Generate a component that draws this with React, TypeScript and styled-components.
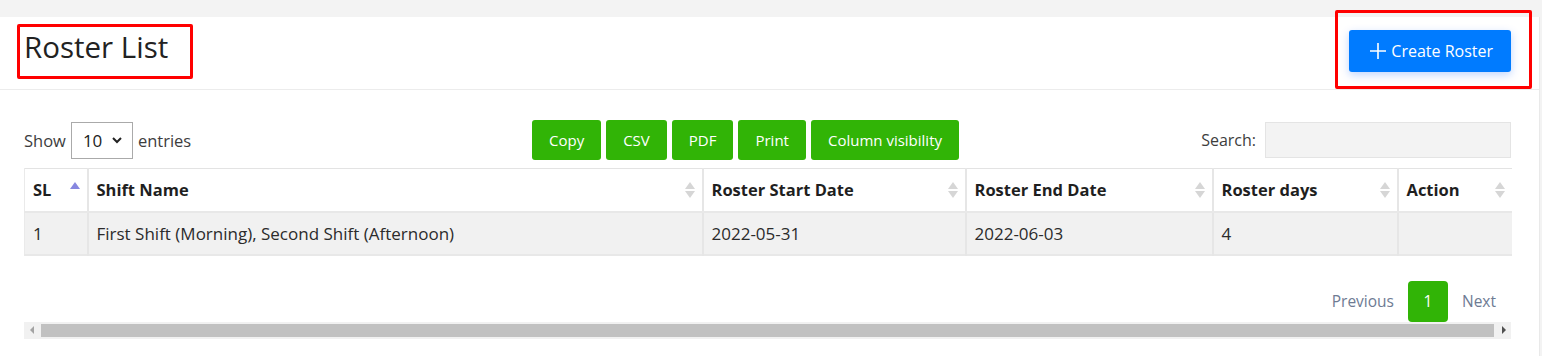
import React from 'react'
import styled, { createGlobalStyle, css } from 'styled-components'

const GlobalStyle = createGlobalStyle`
	body {
		margin: 0;
		background: #f3f3f3;
		font-family: 'Open Sans', 'Lato', sans-serif;
		color: #212529;
	}
`

const columns = [
	{ title: 'SL', width: 63, sort: 'asc' },
	{ title: 'Shift Name', width: 615 },
	{ title: 'Roster Start Date', width: 263 },
	{ title: 'Roster End Date', width: 247 },
	{ title: 'Roster days', width: 185 },
	{ title: 'Action', width: 114 },
]

const rows = [['1', 'First Shift (Morning), Second Shift (Afternoon)', '2022-05-31', '2022-06-03', '4', '']]

const exportButtons = ['Copy', 'CSV', 'PDF', 'Print', 'Column visibility']

export default function App() {
	return (
		<>
			<GlobalStyle />
			<Page>
				<Card>
					<CardHeader>
						<Title>Roster List</Title>
						<CreateButton>
							<svg width="18" height="18" viewBox="0 0 18 18">
								<path d="M9 1v16M1 9h16" stroke="#fff" strokeWidth="1.6" />
							</svg>
							Create Roster
						</CreateButton>
					</CardHeader>
					<CardBody>
						<Controls>
							<Length>
								Show
								<Select>
									10
									<svg width="12" height="8" viewBox="0 0 12 8">
										<path d="M2 2l4 4 4-4" fill="none" stroke="#222" strokeWidth="2" />
									</svg>
								</Select>
								entries
							</Length>
							<ButtonGroup>
								{exportButtons.map((b) => (
									<ExportButton key={b}>{b}</ExportButton>
								))}
							</ButtonGroup>
							<SearchBox>
								Search:
								<SearchInput />
							</SearchBox>
						</Controls>
						<Table>
							<colgroup>
								{columns.map((c) => (
									<col key={c.title} style={{ width: c.width }} />
								))}
							</colgroup>
							<thead>
								<tr>
									{columns.map((c) => (
										<Th key={c.title}>
											{c.title}
											<SortIcon>
												<Arrow $up $active={c.sort === 'asc'} />
												{c.sort !== 'asc' && <Arrow />}
											</SortIcon>
										</Th>
									))}
								</tr>
							</thead>
							<tbody>
								{rows.map((r) => (
									<tr key={r[0]}>
										{r.map((cell, i) => (
											<Td key={i}>{cell}</Td>
										))}
									</tr>
								))}
							</tbody>
						</Table>
						<Pagination>
							<PageLink>Previous</PageLink>
							<PageLink $current>1</PageLink>
							<PageLink>Next</PageLink>
						</Pagination>
						<ScrollBar>
							<ScrollArrow $left />
							<ScrollThumb />
							<ScrollArrow />
						</ScrollBar>
					</CardBody>
				</Card>
				<Annotation style={{ left: 17, top: 24, width: 176, height: 55 }} />
				<Annotation style={{ left: 1335, top: 10, width: 197, height: 79 }} />
			</Page>
		</>
	)
}

const Page = styled.div`
	position: relative;
	padding-top: 17px;
	height: 339px;
`

const Card = styled.div`
	background: #fff;
	margin-right: 2px;
	border-right: 1px solid #e9e9e9;
	height: 339px;
`

const CardHeader = styled.div`
	height: 73px;
	box-sizing: border-box;
	border-bottom: 1px solid #ececec;
	display: flex;
	align-items: center;
	justify-content: space-between;
	padding: 0 28px 4px 24px;
`

const Title = styled.h1`
	margin: 0 0 8px;
	font-size: 29.5px;
	line-height: 36px;
	font-weight: 400;
	color: #222;
`

const CreateButton = styled.button`
	display: flex;
	align-items: center;
	gap: 4px;
	height: 42px;
	padding: 0 18px 0 20px;
	border: none;
	border-radius: 3px;
	background: #007bff;
	color: #fff;
	font-family: inherit;
	font-size: 16px;
	box-shadow: 0 3px 8px rgba(0, 90, 255, 0.25);
`

const CardBody = styled.div`
	padding: 30px 28px 0 24px;
`

const Controls = styled.div`
	display: grid;
	grid-template-columns: 508px auto 1fr;
	align-items: center;
	height: 40px;
`

const Length = styled.label`
	display: flex;
	align-items: center;
	gap: 5px;
	font-size: 16.5px;
	color: #3d3d3d;
`

const Select = styled.div`
	display: flex;
	align-items: center;
	justify-content: space-between;
	width: 62px;
	height: 37px;
	box-sizing: border-box;
	border: 1px solid #aaa;
	padding: 0 9px 0 11px;
	color: #222;
	font-size: 17px;
`

const ButtonGroup = styled.div`
	display: flex;
	gap: 5px;
`

const ExportButton = styled.button`
	height: 40px;
	padding: 0 17px;
	border: none;
	border-radius: 3px;
	background: #31b406;
	color: #fff;
	font-family: inherit;
	font-size: 15px;
`

const SearchBox = styled.label`
	display: flex;
	align-items: center;
	justify-content: flex-end;
	gap: 9px;
	font-size: 16px;
	color: #3d3d3d;
`

const SearchInput = styled.div`
	width: 246px;
	height: 36px;
	box-sizing: border-box;
	background: #f3f3f3;
	border: 1px solid #e4e4e4;
`

const Table = styled.table`
	margin-top: 8px;
	width: 1487px;
	table-layout: fixed;
	border-collapse: collapse;
	border-top: 1px solid #e3e3e3;
	border-bottom: 2px solid #e8e8e8;
	font-size: 17px;
`

const cell = css`
	height: 43px;
	box-sizing: border-box;
	padding: 0 8px;
	text-align: left;
	border-left: 2px solid #e6e6e6;
	white-space: nowrap;
	&:first-child {
		border-left: 1px solid #eaeaea;
	}
`

const Th = styled.th`
	${cell}
	position: relative;
	font-size: 16.5px;
	font-weight: 700;
	color: #1f1f1f;
	border-bottom: 2px solid #e8e8e8;
`

const Td = styled.td`
	${cell}
	background: #f1f1f1;
	color: #2b2b2b;
`

const SortIcon = styled.span`
	position: absolute;
	right: 7px;
	top: 13px;
	display: flex;
	flex-direction: column;
	gap: 2px;
`

const Arrow = styled.span<{ $up?: boolean; $active?: boolean }>`
	width: 0;
	height: 0;
	border-left: 5px solid transparent;
	border-right: 5px solid transparent;
	${({ $up, $active }) =>
		$up
			? `border-bottom: 7px solid ${$active ? '#8787e0' : '#d6d6d6'};`
			: 'border-top: 7px solid #d6d6d6;'}
`

const Pagination = styled.div`
	display: flex;
	justify-content: flex-end;
	align-items: center;
	margin-top: 25px;
	padding-right: 1px;
`

const PageLink = styled.span<{ $current?: boolean }>`
	display: flex;
	align-items: center;
	justify-content: center;
	height: 41px;
	padding: 0 14px;
	font-size: 15.5px;
	color: #6e7b93;
	${({ $current }) =>
		$current &&
		`
		width: 40px;
		padding: 0;
		box-sizing: border-box;
		border-radius: 4px;
		background: #31b406;
		color: #fff;
	`}
`

const ScrollBar = styled.div`
	display: flex;
	align-items: center;
	height: 17px;
	background: #f1f1f1;
`

const ScrollThumb = styled.div`
	flex: 1;
	height: 13px;
	margin: 0 2px;
	background: #c1c1c1;
`

const ScrollArrow = styled.span<{ $left?: boolean }>`
	width: 15px;
	display: flex;
	justify-content: center;
	&::before {
		content: '';
		border-top: 4px solid transparent;
		border-bottom: 4px solid transparent;
		${({ $left }) =>
			$left ? 'border-right: 4px solid #a3a3a3;' : 'border-left: 4px solid #505050;'}
	}
`

const Annotation = styled.div`
	position: absolute;
	box-sizing: border-box;
	border: 3px solid #ff0000;
	border-radius: 2px;
	pointer-events: none;
`
